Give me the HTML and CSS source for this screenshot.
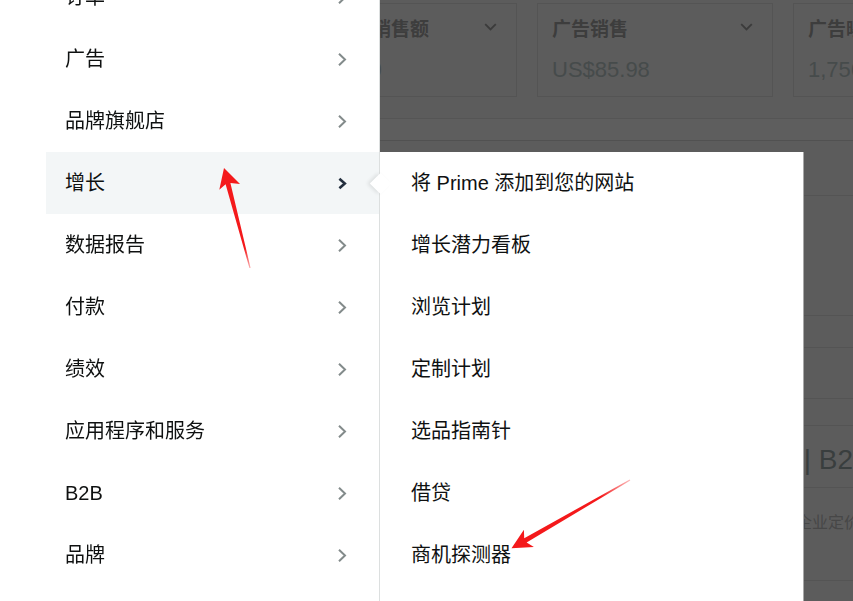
FILE: index.html
```html
<!DOCTYPE html>
<html lang="zh-CN">
<head>
    <meta charset="UTF-8">
    <meta name="viewport" content="width=device-width, initial-scale=1.0">
    <title>卖家平台</title>
    <link rel="stylesheet" href="styles.css">
</head>
<body>
    <!-- 后面被遮住的首页 -->
    <main class="page">
        <div class="cards">
            <div class="card">
                <div class="card-head">
                    <span>订购商品销售额</span>
                    <svg class="caret" viewBox="0 0 13 8"><path d="M1.2 1.2l5.3 5.3 5.3-5.3"/></svg>
                </div>
                <div class="card-value">US$0.00</div>
            </div>
            <div class="card">
                <div class="card-head">
                    <span>广告销售</span>
                    <svg class="caret" viewBox="0 0 13 8"><path d="M1.2 1.2l5.3 5.3 5.3-5.3"/></svg>
                </div>
                <div class="card-value">US$85.98</div>
            </div>
            <div class="card">
                <div class="card-head">
                    <span>广告曝光量</span>
                    <svg class="caret" viewBox="0 0 13 8"><path d="M1.2 1.2l5.3 5.3 5.3-5.3"/></svg>
                </div>
                <div class="card-value">1,756</div>
            </div>
        </div>
        <div class="toolbar"></div>
        <div class="panel-row filters"></div>
        <div class="panel-row chart"></div>
        <div class="panel-row legend"></div>
        <div class="panel-row tabs"></div>
        <div class="panel-row tab-line"></div>
        <div class="panel-row b2b-head">商业洞察 | B2B</div>
        <div class="panel-row b2b-body">查看并管理您的企业定价</div>
    </main>

    <!-- 左侧导航菜单 -->
    <nav class="drawer">
        <ul class="menu">
            <li class="menu-item">
                <span>订单</span>
                <svg class="chev" viewBox="0 0 10 15"><path d="M2 1.8l6 5.7-6 5.7"/></svg>
            </li>
            <li class="menu-item">
                <span>广告</span>
                <svg class="chev" viewBox="0 0 10 15"><path d="M2 1.8l6 5.7-6 5.7"/></svg>
            </li>
            <li class="menu-item">
                <span>品牌旗舰店</span>
                <svg class="chev" viewBox="0 0 10 15"><path d="M2 1.8l6 5.7-6 5.7"/></svg>
            </li>
            <li class="menu-item active">
                <span>增长</span>
                <svg class="chev" viewBox="0 0 10 15"><path d="M2.4 2.8l5.4 4.7-5.4 4.7"/></svg>
                <ul class="submenu">
                    <li>将 Prime 添加到您的网站</li>
                    <li>增长潜力看板</li>
                    <li>浏览计划</li>
                    <li>定制计划</li>
                    <li>选品指南针</li>
                    <li>借贷</li>
                    <li>商机探测器</li>
                </ul>
            </li>
            <li class="menu-item">
                <span>数据报告</span>
                <svg class="chev" viewBox="0 0 10 15"><path d="M2 1.8l6 5.7-6 5.7"/></svg>
            </li>
            <li class="menu-item">
                <span>付款</span>
                <svg class="chev" viewBox="0 0 10 15"><path d="M2 1.8l6 5.7-6 5.7"/></svg>
            </li>
            <li class="menu-item">
                <span>绩效</span>
                <svg class="chev" viewBox="0 0 10 15"><path d="M2 1.8l6 5.7-6 5.7"/></svg>
            </li>
            <li class="menu-item">
                <span>应用程序和服务</span>
                <svg class="chev" viewBox="0 0 10 15"><path d="M2 1.8l6 5.7-6 5.7"/></svg>
            </li>
            <li class="menu-item">
                <span>B2B</span>
                <svg class="chev" viewBox="0 0 10 15"><path d="M2 1.8l6 5.7-6 5.7"/></svg>
            </li>
            <li class="menu-item">
                <span>品牌</span>
                <svg class="chev" viewBox="0 0 10 15"><path d="M2 1.8l6 5.7-6 5.7"/></svg>
            </li>
        </ul>
    </nav>

    <!-- 红色标注箭头 -->
    <svg class="marks" viewBox="0 0 853 601">
        <defs>
            <linearGradient id="fadeA" gradientUnits="userSpaceOnUse" x1="224" y1="168" x2="250" y2="268">
                <stop offset="0" stop-color="#f4191b"/>
                <stop offset="0.8" stop-color="#f4191b"/>
                <stop offset="1" stop-color="#f4191b" stop-opacity="0.35"/>
            </linearGradient>
            <linearGradient id="fadeB" gradientUnits="userSpaceOnUse" x1="511" y1="548" x2="630" y2="480">
                <stop offset="0" stop-color="#f4191b"/>
                <stop offset="0.75" stop-color="#f4191b"/>
                <stop offset="1" stop-color="#f4191b" stop-opacity="0.3"/>
            </linearGradient>
        </defs>
        <polygon fill="url(#fadeA)" points="224,168 240,184 230.4,183 250.6,268 249.4,268 225.6,184.2 219.3,189.8"/>
        <polygon fill="url(#fadeB)" points="511.5,548.3 533.9,547.1 526.6,542.6 630.3,480.5 629.7,479.5 524.2,538.2 523.9,529.7"/>
    </svg>
</body>
</html>
```

FILE: styles.css
```css
body {
    margin: 0;
    overflow: hidden;
    font-family: "Liberation Sans", "Noto Sans CJK SC", sans-serif;
    color: #0f1111;
    background-color: #5c5c5c;
}

/* 首页（遮罩下的暗色） */
.page {
    padding: 3px 0 0 281px;
}
.cards {
    display: flex;
    gap: 20px;
}
.card {
    flex: 0 0 236px;
    height: 94px;
    box-sizing: border-box;
    border: 1px solid #545454;
    padding: 13px 19px 0 14px;
}
.card-head {
    display: flex;
    justify-content: space-between;
    align-items: center;
    font-size: 19px;
    line-height: 26px;
    font-weight: bold;
    color: #3d3d3d;
}
.caret {
    width: 13px;
    height: 8px;
    margin-top: -6px;
    fill: none;
    stroke: #3b3b3b;
    stroke-width: 1.8;
}
.card-value {
    margin-top: 14px;
    font-size: 22px;
    line-height: 26px;
    color: #464b4b;
    white-space: nowrap;
}
.toolbar {
    margin-top: 21px;
    height: 21px;
    border-top: 1px solid #555;
    border-bottom: 1px solid #515151;
    background-color: #5e5e5e;
}
.panel-row {
    border-bottom: 1px solid #545454;
    box-sizing: content-box;
}
.filters { height: 54px; }
.chart { height: 119px; }
.legend { height: 31px; }
.tabs { height: 50px; }
.tab-line { height: 26px; }
.b2b-head {
    height: 61px;
    display: flex;
    align-items: center;
    padding-left: 403px;
    font-size: 28px;
    color: #393e3e;
    white-space: nowrap;
}
.b2b-body {
    height: 68px;
    padding: 24px 0 0 403px;
    font-size: 16px;
    line-height: 22px;
    color: #474747;
    white-space: nowrap;
}

/* 左侧导航 */
.drawer {
    position: fixed;
    top: 0;
    left: 0;
    bottom: 0;
    width: 380px;
    box-sizing: border-box;
    background-color: #fff;
    border-right: 1px solid #dcdfdf;
    z-index: 2;
}
.menu {
    list-style: none;
    margin: -34px 0 0;
    padding: 0 0 0 46px;
}
.menu-item {
    position: relative;
    display: flex;
    align-items: center;
    height: 62px;
    padding-left: 19px;
    font-size: 20px;
    line-height: 1.2;
}
.chev {
    margin-left: auto;
    margin-right: 32px;
    width: 10px;
    height: 15px;
    fill: none;
    stroke: #838b8b;
    stroke-width: 2;
}
.menu-item.active {
    background-color: #f3f6f7;
}
.menu-item.active .chev {
    stroke: #232f3e;
    stroke-width: 2.6;
}

/* 二级菜单 */
.submenu {
    position: absolute;
    top: 0;
    left: calc(100% + 1px);
    width: 423px;
    height: 470px;
    margin: 0;
    padding: 0;
    list-style: none;
    background-color: #fff;
    border-right: 1px solid #a8a8a8;
}
.submenu::before {
    content: "";
    position: absolute;
    left: -7.5px;
    top: 23.5px;
    width: 15px;
    height: 15px;
    background-color: #fff;
    transform: rotate(45deg);
    box-shadow: -2px 2px 4px rgba(0, 0, 0, 0.09);
}
.submenu li {
    position: relative;
    display: flex;
    align-items: center;
    height: 62px;
    padding-left: 31px;
}

.marks {
    position: fixed;
    top: 0;
    left: 0;
    width: 853px;
    height: 601px;
    z-index: 3;
    pointer-events: none;
}
```
